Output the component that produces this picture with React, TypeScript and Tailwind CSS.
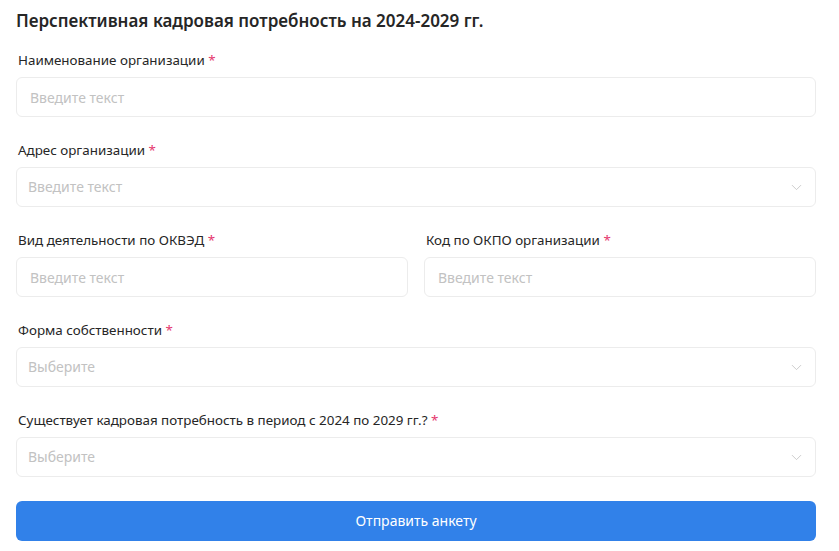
import { ChevronDown } from 'lucide-react'

function Label({ children }: { children: React.ReactNode }) {
  return (
    <div className="h-[18px] pl-[2px] text-[13.4px] leading-[18px] text-[#262626]">
      {children} <span className="text-[#e5366d]">*</span>
    </div>
  )
}

function TextInput() {
  return (
    <input
      placeholder="Введите текст"
      className="h-10 w-full rounded-md border border-[#ececec] bg-white px-[13px] text-sm text-[#262626] outline-none placeholder:text-[#c2c2c2]"
    />
  )
}

function Select({ placeholder }: { placeholder: string }) {
  return (
    <div className="flex h-10 w-full items-center justify-between rounded-md border border-[#ececec] bg-white pl-[11px] pr-[10px]">
      <span className="text-sm text-[#c2c2c2]">{placeholder}</span>
      <ChevronDown size={17} strokeWidth={1.2} className="text-[#c4c4c4]" />
    </div>
  )
}

function Field({ label, children }: { label: string; children: React.ReactNode }) {
  return (
    <div className="flex flex-col gap-2">
      <Label>{label}</Label>
      {children}
    </div>
  )
}

export default function App() {
  return (
    <div
      className="min-h-[551px] w-full bg-white px-4 pt-[9px]"
      style={{ fontFamily: '"Noto Sans", "Open Sans", sans-serif' }}
    >
      <div className="w-[800px]">
        <h1 className="mb-[18px] text-[17px] leading-6 font-semibold text-[#262626]">
          Перспективная кадровая потребность на 2024-2029 гг.
        </h1>
        <div className="flex flex-col gap-6">
          <Field label="Наименование организации">
            <TextInput />
          </Field>
          <Field label="Адрес организации">
            <Select placeholder="Введите текст" />
          </Field>
          <div className="grid grid-cols-2 gap-4">
            <Field label="Вид деятельности по ОКВЭД">
              <TextInput />
            </Field>
            <Field label="Код по ОКПО организации">
              <TextInput />
            </Field>
          </div>
          <Field label="Форма собственности">
            <Select placeholder="Выберите" />
          </Field>
          <Field label="Существует кадровая потребность в период с 2024 по 2029 гг.?">
            <Select placeholder="Выберите" />
          </Field>
          <button className="h-10 w-full rounded-md bg-[#3181e9] text-sm text-white">
            Отправить анкету
          </button>
        </div>
      </div>
    </div>
  )
}
